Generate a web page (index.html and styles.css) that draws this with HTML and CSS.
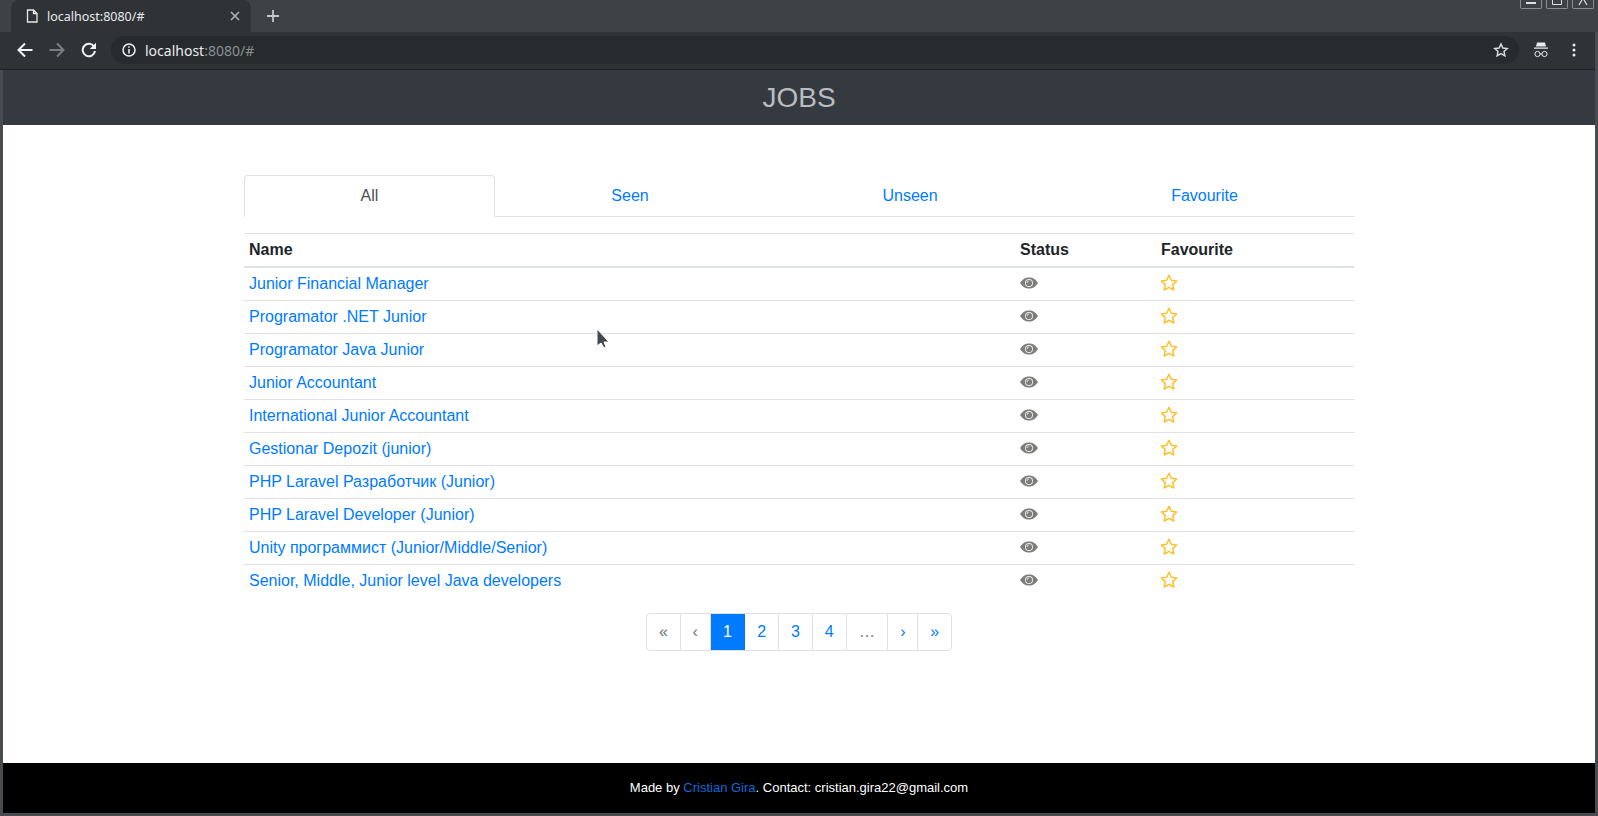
FILE: index.html
```html
<!DOCTYPE html>
<html lang="en">
<head>
<meta charset="utf-8">
<title>localhost:8080/#</title>
<link rel="stylesheet" href="styles.css">
</head>
<body>
<div class="tabstrip">
  <div class="tab">
    <svg class="tab-icon" width="12" height="14" viewBox="0 0 12 14"><path d="M1.500 1h6l3.500 3.500V13h-9.500z M7.500 1v3.500H11" fill="none" stroke="#e8eaed" stroke-width="1.300"/></svg>
    <span class="tab-title">localhost:8080/#</span>
    <svg class="tab-close" width="10" height="10" viewBox="0 0 10 10"><path d="M1 1l8 8M9 1l-8 8" stroke="#b4b7ba" stroke-width="1.500"/></svg>
  </div>
  <svg class="new-tab" width="12" height="12" viewBox="0 0 12 12"><path d="M6 0v12M0 6h12" stroke="#c4c7ca" stroke-width="1.800"/></svg>
  <div class="win-controls">
    <span class="win-btn"><svg width="10" height="9" viewBox="0 0 10 9"><path d="M0 3h10" stroke="#e0e0e0" stroke-width="2"/></svg></span>
    <span class="win-btn"><svg width="10" height="9" viewBox="0 0 10 9"><path d="M.5 0v4.500h9V0" fill="none" stroke="#e0e0e0"/></svg></span>
    <span class="win-btn"><svg width="10" height="9" viewBox="0 0 10 9"><path d="M1 5l3-5M9 5L6 0" fill="none" stroke="#e0e0e0" stroke-width="1.200"/></svg></span>
  </div>
</div>
<div class="toolbar">
  <svg class="nav-icon" width="16" height="16" viewBox="0 0 16 16"><path d="M15.500 8H2M8 1.500L1.500 8 8 14.500" fill="none" stroke="#f1f3f4" stroke-width="2"/></svg>
  <svg class="nav-icon" width="16" height="16" viewBox="0 0 16 16"><path d="M.5 8H14M8 1.500L14.500 8 8 14.500" fill="none" stroke="#7b7e80" stroke-width="2"/></svg>
  <svg class="nav-icon" width="16" height="16" viewBox="0 0 16 16"><path d="M13.300 5A6.200 6.200 0 1 0 14 9" fill="none" stroke="#f1f3f4" stroke-width="2"/><path d="M15 .7V7H8.700z" fill="#f1f3f4"/></svg>
  <div class="omnibox">
    <svg class="info-icon" width="14" height="14" viewBox="0 0 14 14"><circle cx="7" cy="7" r="6" fill="none" stroke="#f1f3f4" stroke-width="1.500"/><path d="M7 6v4.500M7 3.300v1.500" stroke="#f1f3f4" stroke-width="1.500"/></svg>
    <span class="url">localhost<span class="url-dim">:8080/#</span></span>
    <svg class="bookmark" width="16" height="16" viewBox="0 0 24 24"><path d="M12 3l2.800 6 6.600.8-4.900 4.500 1.300 6.500L12 17.500l-5.800 3.300 1.300-6.500-4.900-4.500 6.600-.8z" fill="none" stroke="#dadce0" stroke-width="2.200"/></svg>
  </div>
  <svg class="incognito" width="16" height="16" viewBox="0 0 16 16"><path d="M4 .5h8l1 4H3z M1 5.500h14v1.200H1z" fill="#e8eaed"/><circle cx="4.500" cy="12" r="2.600" fill="none" stroke="#e8eaed"/><circle cx="11.500" cy="12" r="2.600" fill="none" stroke="#e8eaed"/><path d="M7 12h2" stroke="#e8eaed"/></svg>
  <svg class="menu" width="4" height="14" viewBox="0 0 4 14"><circle cx="2" cy="2" r="1.500" fill="#e8eaed"/><circle cx="2" cy="7" r="1.500" fill="#e8eaed"/><circle cx="2" cy="12" r="1.500" fill="#e8eaed"/></svg>
</div>
<div class="viewport">
  <header class="app-header">JOBS</header>
  <main class="content">
    <nav class="tabs">
      <a class="tab-link active">All</a>
      <a class="tab-link">Seen</a>
      <a class="tab-link">Unseen</a>
      <a class="tab-link">Favourite</a>
    </nav>
    <div class="jobs">
      <div class="row head"><span>Name</span><span>Status</span><span>Favourite</span></div>
      <div class="row"><a>Junior Financial Manager</a><svg class="eye" viewBox="0 0 18 12"><use href="#eye"/></svg><svg class="star" viewBox="0 0 18 18"><use href="#star"/></svg></div>
      <div class="row"><a>Programator .NET Junior</a><svg class="eye" viewBox="0 0 18 12"><use href="#eye"/></svg><svg class="star" viewBox="0 0 18 18"><use href="#star"/></svg></div>
      <div class="row"><a>Programator Java Junior</a><svg class="eye" viewBox="0 0 18 12"><use href="#eye"/></svg><svg class="star" viewBox="0 0 18 18"><use href="#star"/></svg></div>
      <div class="row"><a>Junior Accountant</a><svg class="eye" viewBox="0 0 18 12"><use href="#eye"/></svg><svg class="star" viewBox="0 0 18 18"><use href="#star"/></svg></div>
      <div class="row"><a>International Junior Accountant</a><svg class="eye" viewBox="0 0 18 12"><use href="#eye"/></svg><svg class="star" viewBox="0 0 18 18"><use href="#star"/></svg></div>
      <div class="row"><a>Gestionar Depozit (junior)</a><svg class="eye" viewBox="0 0 18 12"><use href="#eye"/></svg><svg class="star" viewBox="0 0 18 18"><use href="#star"/></svg></div>
      <div class="row"><a>PHP Laravel Разработчик (Junior)</a><svg class="eye" viewBox="0 0 18 12"><use href="#eye"/></svg><svg class="star" viewBox="0 0 18 18"><use href="#star"/></svg></div>
      <div class="row"><a>PHP Laravel Developer (Junior)</a><svg class="eye" viewBox="0 0 18 12"><use href="#eye"/></svg><svg class="star" viewBox="0 0 18 18"><use href="#star"/></svg></div>
      <div class="row"><a>Unity программист (Junior/Middle/Senior)</a><svg class="eye" viewBox="0 0 18 12"><use href="#eye"/></svg><svg class="star" viewBox="0 0 18 18"><use href="#star"/></svg></div>
      <div class="row last"><a>Senior, Middle, Junior level Java developers</a><svg class="eye" viewBox="0 0 18 12"><use href="#eye"/></svg><svg class="star" viewBox="0 0 18 18"><use href="#star"/></svg></div>
    </div>
    <div class="pager">
      <a class="pg w34 muted">«</a><a class="pg w30 muted">‹</a><a class="pg w35 current">1</a><a class="pg w34">2</a><a class="pg w34">3</a><a class="pg w34">4</a><a class="pg w42 muted">…</a><a class="pg w30">›</a><a class="pg w33">»</a>
    </div>
    <svg class="cursor" width="14" height="22" viewBox="0 0 14 22"><path d="M1 1v17l4-3 3 5 2-1-2-5h5z" fill="#46494e" stroke="#fff"/></svg>
  </main>
  <footer class="app-footer">Made by <a>Cristian Gira</a>. Contact: cristian.gira22@gmail.com</footer>
</div>
<svg class="defs" width="0" height="0">
  <defs>
    <g id="eye"><path d="M0 6C3 1.500 6 .5 9 .5s6 1 9 5.500c-3 4.500-6 5.500-9 5.500S3 10.500 0 6z" fill="#7d7d7b"/><circle cx="9" cy="6" r="4" fill="#fff" opacity=".85"/><circle cx="9" cy="6" r="3.100" fill="#7d7d7b"/><path d="M7 6a2 2 0 0 1 2-2" stroke="#fff" fill="none" opacity=".7"/></g>
    <path id="star" d="M9 1.300l2.300 5 5.400.6-4 3.700 1.100 5.400L9 13.300 4.200 16l1.100-5.400-4-3.700 5.400-.6z" fill="none" stroke="#ffc02e" stroke-width="1.500" stroke-linejoin="round"/>
  </defs>
</svg>
</body>
</html>
```
FILE: styles.css
```css
* { box-sizing: border-box; }
html, body { height: 100%; }
body {
  margin: 0;
  height: 816px;
  overflow: hidden;
  display: flex;
  flex-direction: column;
  background: #484c50;
  font-family: "Liberation Sans", Arial, sans-serif;
  font-size: 16px;
  color: #212529;
}
.tabstrip {
  height: 32px;
  flex: none;
  position: relative;
  display: flex;
  align-items: center;
  padding-left: 11px;
  background: #3e4245;
}
.tab {
  width: 240px;
  height: 32px;
  display: flex;
  align-items: center;
  padding: 0 11px 0 15px;
  background: #2f3336;
  border-radius: 8px 8px 0 0;
}
.tab-icon { flex: none; margin-right: 9px; }
.tab-title { flex: 1; font-family: "Noto Sans", sans-serif; font-size: 12.500px; color: #e8eaed; }
.tab-close { flex: none; }
.new-tab { margin-left: 16px; }
.win-controls { position: absolute; top: 0; right: 4px; display: flex; gap: 4px; }
.win-btn {
  width: 22px;
  height: 9px;
  display: flex;
  justify-content: center;
  border: 1px solid #8a8d90;
  border-top: 0;
  border-radius: 0 0 2px 2px;
}
.toolbar {
  height: 38px;
  flex: none;
  display: flex;
  align-items: center;
  margin-right: 3px;
  padding: 0 0 1px 17px;
  background: #2f3336;
  border-bottom: 1px solid #1f2225;
}
.nav-icon { flex: none; margin-right: 16px; }
.omnibox {
  width: 1408px;
  height: 28px;
  margin-left: -2px;
  display: flex;
  align-items: center;
  padding: 0 10px 0 11px;
  background: #282b2e;
  border-radius: 14px;
}
.info-icon { flex: none; margin-right: 9px; }
.url { flex: 1; font-family: "Noto Sans", sans-serif; font-size: 14px; color: #e8eaed; }
.url-dim { color: #8b8e91; }
.incognito { flex: none; margin-left: 14px; }
.menu { flex: none; margin-left: 23px; }
.viewport {
  flex: 1;
  min-height: 0;
  margin: 0 3px 3px;
  display: flex;
  flex-direction: column;
  background: #fff;
}
.app-header {
  height: 55px;
  flex: none;
  display: flex;
  align-items: center;
  justify-content: center;
  background: #343a40;
  color: #b9bdc0;
  font-size: 28px;
}
.content {
  flex: 1;
  position: relative;
  padding: 50px 241px 0;
}
.tabs {
  display: grid;
  grid-template-columns: 251px 270px 290px 299px;
  height: 42px;
  border-bottom: 1px solid #dee2e6;
}
.tab-link {
  height: 42px;
  display: flex;
  align-items: center;
  justify-content: center;
  color: #007bff;
}
.tab-link.active {
  color: #495057;
  background: #fff;
  border: 1px solid #dee2e6;
  border-bottom-color: #fff;
  border-radius: 4px 4px 0 0;
}
.jobs { margin-top: 16px; }
.row {
  display: grid;
  grid-template-columns: 771px 141px 198px;
  align-items: center;
  height: 33px;
  padding-left: 5px;
  border-top: 1px solid #dee2e6;
}
.row a { color: #007bff; }
.head {
  height: 35px;
  font-weight: 700;
  border-bottom: 2px solid #dee2e6;
}
.head + .row { border-top: 0; height: 32px; }
.eye { width: 18px; height: 12px; margin-bottom: 2px; }
.star { width: 18px; height: 18px; margin: 0 0 2px -1px; }
.pager {
  width: 306px;
  height: 38px;
  margin: 16px 0 0 402px;
  display: flex;
  border: 1px solid #dee2e6;
  border-radius: 4px;
  overflow: hidden;
}
.pg {
  display: flex;
  align-items: center;
  justify-content: center;
  color: #007bff;
  border-right: 1px solid #dee2e6;
}
.pg:last-child { border-right: 0; }
.muted { color: #6c757d; }
.current { background: #007bff; color: #fff; border-right-color: #007bff; }
.w34 { width: 34px; }
.w30 { width: 30px; }
.w35 { width: 35px; }
.w33 { width: 33px; }
.w42 { width: 42px; }
.cursor { position: absolute; left: 593px; top: 203px; }
.app-footer {
  height: 50px;
  flex: none;
  display: flex;
  align-items: center;
  justify-content: center;
  white-space: pre;
  background: #000;
  color: #fff;
  font-size: 13px;
  padding-bottom: 1px;
}
.app-footer a { color: #0e6ad8; }
.defs { position: absolute; }
```
